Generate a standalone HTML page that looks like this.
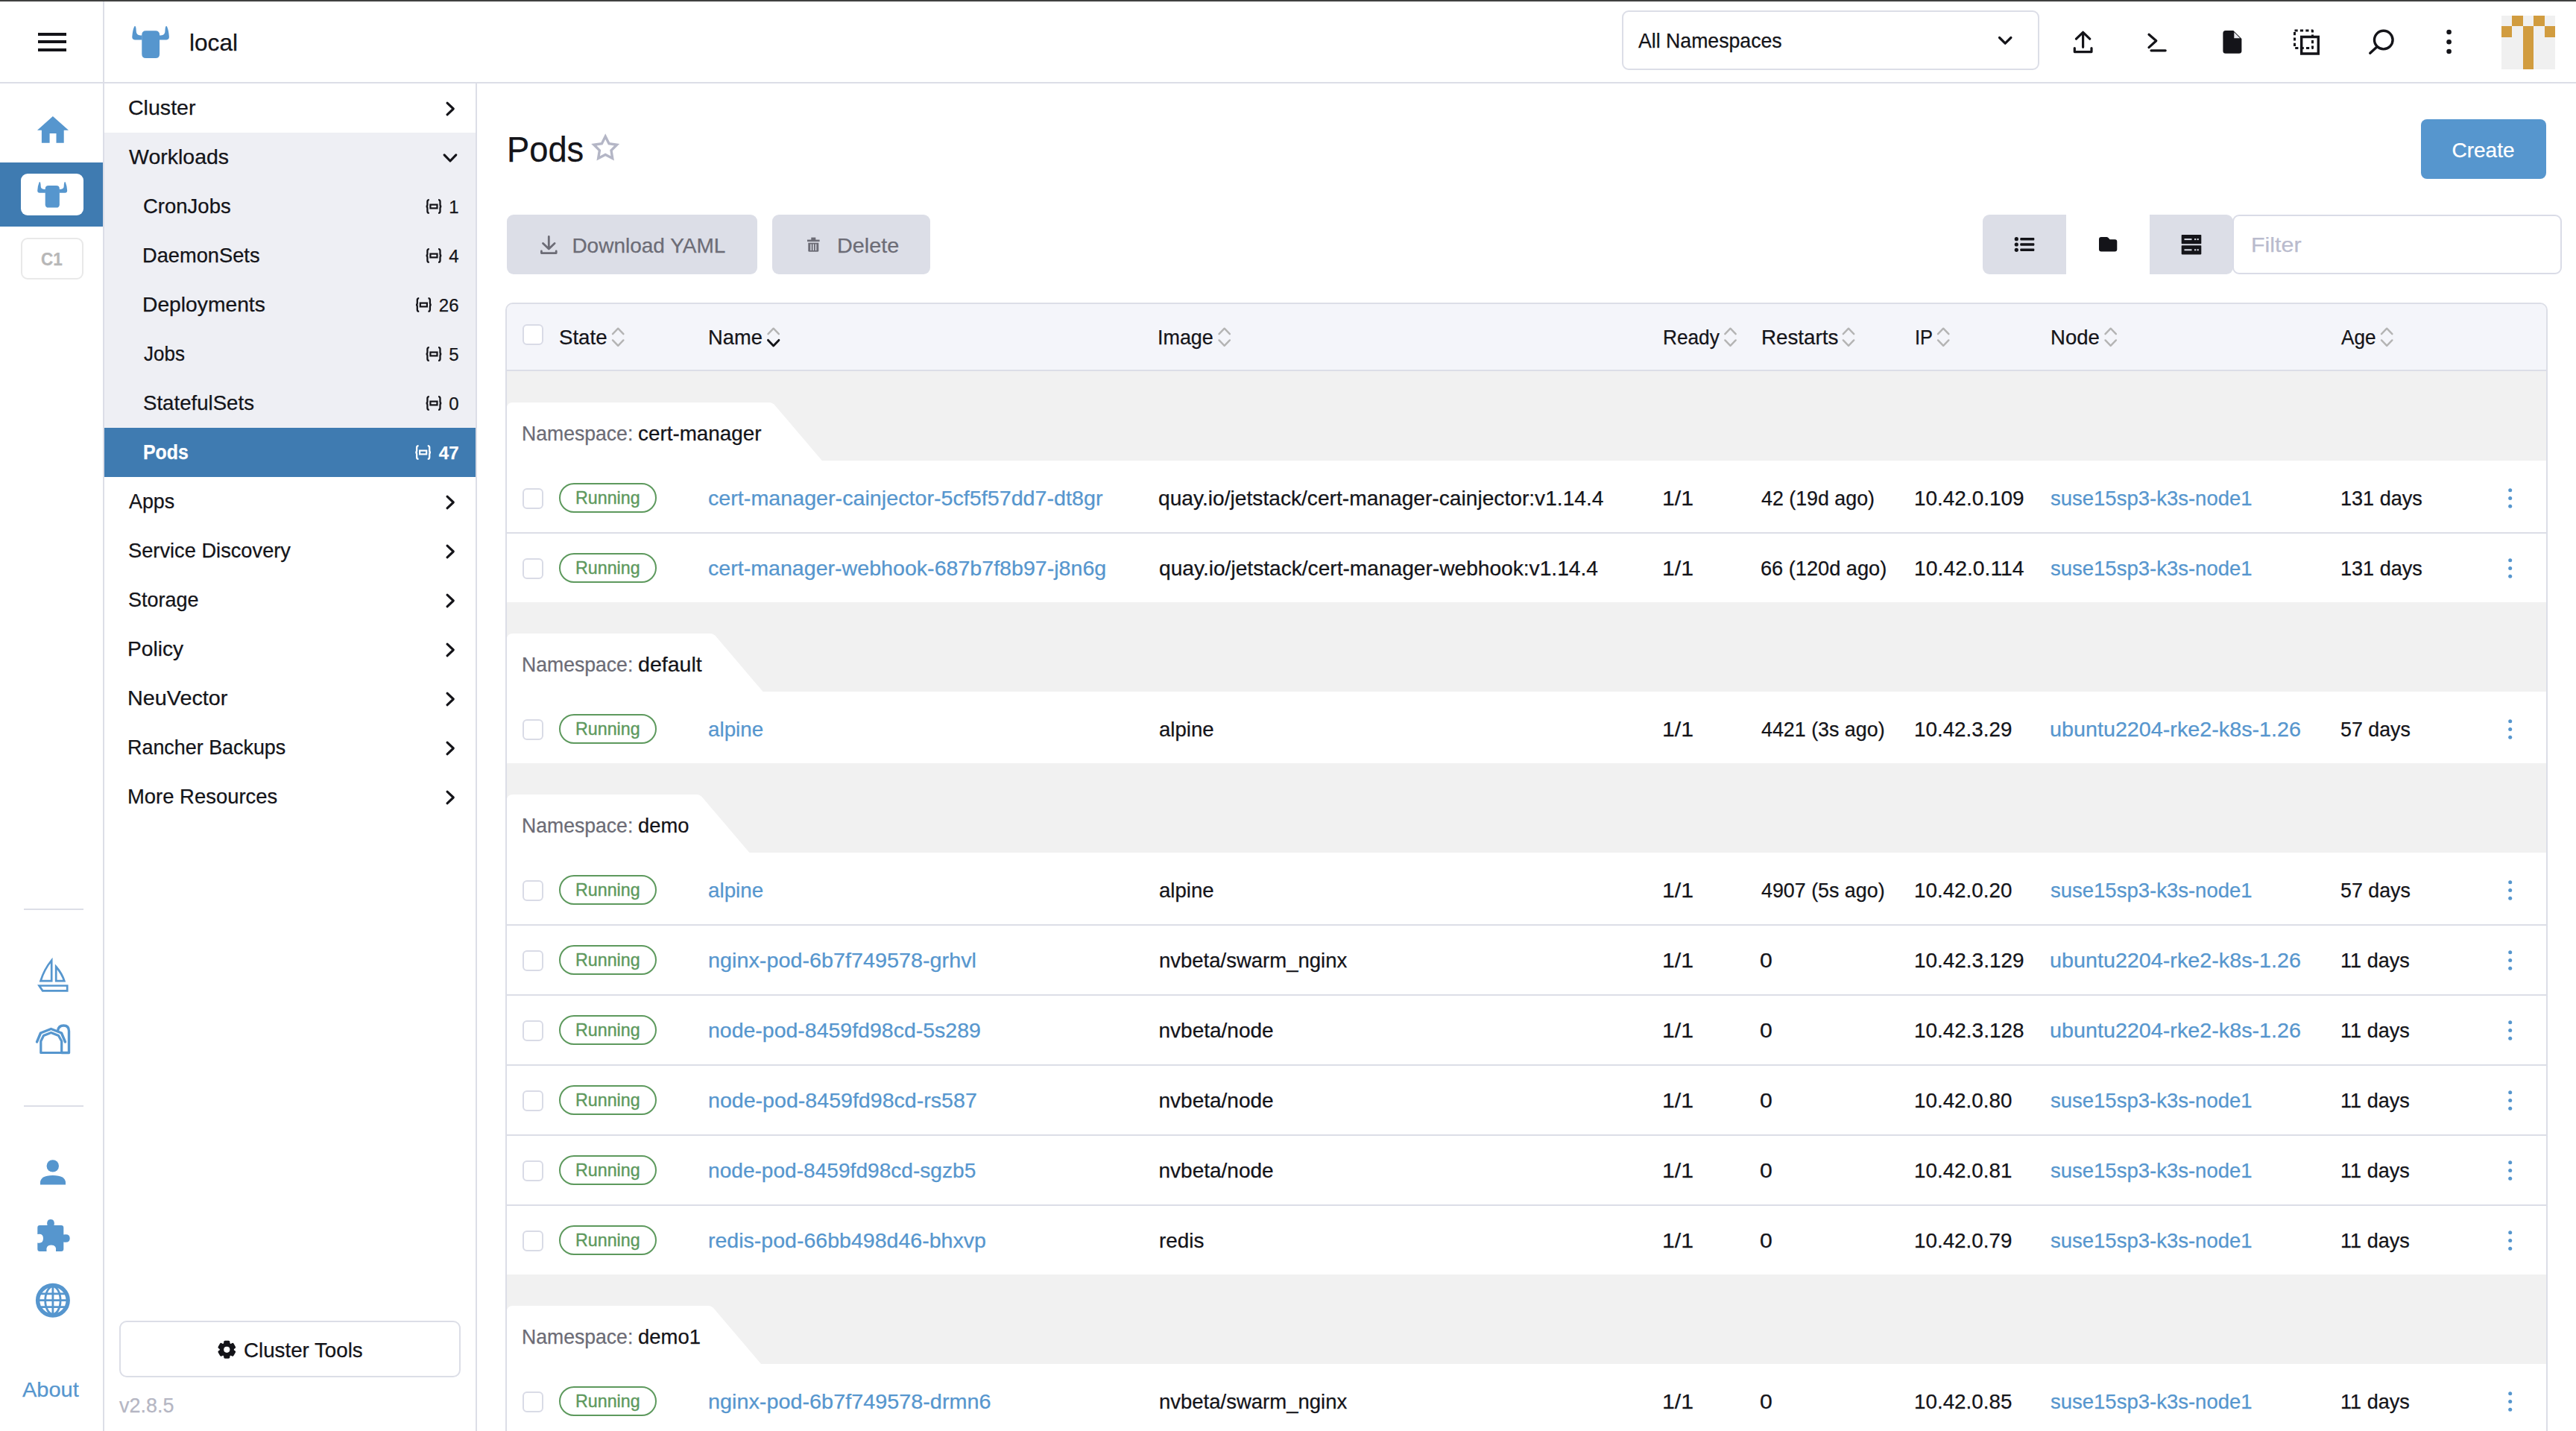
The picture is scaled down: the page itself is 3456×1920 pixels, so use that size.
<!DOCTYPE html>
<html lang="en"><head><meta charset="utf-8"><title>Pods - local - Rancher</title>
<style>
html,body{margin:0;padding:0;background:#fff}
body{width:3456px;height:1920px;overflow:hidden;position:relative;font-family:"Liberation Sans",sans-serif;color:#141419}
.t{position:absolute;white-space:nowrap;line-height:1;transform-origin:0 50%;-webkit-text-stroke:0.25px currentColor}
.b{position:absolute;box-sizing:border-box}
svg{position:absolute;left:0;top:0;overflow:visible}
.cb{position:absolute;box-sizing:border-box;width:28px;height:28px;border:2px solid #d9dbe6;border-radius:6px;background:#fff}
.badge{position:absolute;box-sizing:border-box;width:131px;height:40px;border:2px solid #5d995d;border-radius:20px}
.hl{position:absolute;height:2px;background:#dcdee7}
</style></head><body>

<header>
<div class="b" style="left:0;top:0;width:3456px;height:2px;background:#404140"></div>
<div class="b" style="left:0;top:110px;width:3456px;height:2px;background:#dcdee7"></div>
<div class="b" style="left:51px;top:43.5px;width:38px;height:4.2px;background:#141419"></div>
<div class="b" style="left:51px;top:54.1px;width:38px;height:4.2px;background:#141419"></div>
<div class="b" style="left:51px;top:64.6px;width:38px;height:4.2px;background:#141419"></div>
<svg width="50.2" height="43" viewBox="0 0 50 43" style="left:176.8px;top:34.5px"><path fill="#5696ce" d="M13.2 11.800 Q13.2 6.300 18.700 6.300 L31.500 6.300 Q37 6.300 37 11.800 L37 37.500 Q37 43 31.500 43 L18.700 43 Q13.200 43 13.200 37.500 Z"/><path fill="#5696ce" d="M13.500 18.400 L3.800 18.400 Q0 18.400 0.200 14.300 Q0.800 6 3 0.800 Q3.700 -0.400 4.800 0.500 Q5.700 3 5.700 7.300 Q5.700 12.400 11.300 12.400 L13.500 12.400 Z"/><path fill="#5696ce" d="M36.500 18.400 L46.200 18.400 Q50 18.400 49.800 14.300 Q49.200 6 47 0.800 Q46.300 -0.400 45.200 0.500 Q44.300 3 44.300 7.300 Q44.300 12.400 38.700 12.400 L36.500 12.400 Z"/></svg>
<span class="t" style="left:254.22px;top:41.0px;font-size:32px;color:#141419;transform:scaleX(0.9886);">local</span>
<div class="b" style="left:2176px;top:14px;width:560px;height:80px;border:2px solid #dcdee7;border-radius:9px;background:#fff"></div>
<span class="t" style="left:2198.40px;top:41.1px;font-size:28px;color:#141419;transform:scaleX(0.9523);">All Namespaces</span>
<svg width="3456" height="112"><g fill="none" stroke="#141419" stroke-width="3.2" stroke-linecap="round" stroke-linejoin="round"><path d="M2682.500 50.500 L2690.200 58.200 L2697.900 50.500"/><path d="M2794.600 43.500 L2794.600 63.300 M2785.500 52.200 L2794.600 43.300 L2803.700 52.200 M2783.300 64.500 L2783.300 69.600 L2806 69.600 L2806 64.500"/><path d="M2883 46.200 L2892.800 54.800 L2883 63.600 M2886 67.800 L2905.200 67.800"/><path stroke-width="3.4" stroke-linecap="butt" stroke-linejoin="miter" d="M3087.700 49.500 L3110.300 49.500 L3110.300 72 L3087.700 72 Z"/><path stroke-width="3" stroke-linecap="butt" stroke-dasharray="4.2 3.2" d="M3078.500 41 L3102.500 41 L3102.500 64.500 L3078.500 64.500 Z"/><circle cx="3197.800" cy="53.600" r="12.300" stroke-width="3.400"/><path stroke-width="3.400" d="M3188.800 63 L3179.800 71.300"/></g><path fill="#141419" d="M2982.400 44.500 Q2982.400 41 2985.900 41 L2996.300 41 L3007.400 52.100 L3007.400 68.200 Q3007.400 71.700 3003.900 71.700 L2985.900 71.700 Q2982.400 71.700 2982.400 68.200 Z"/><path fill="#e9e9ee" d="M2997.300 43.200 L3005.300 51.200 L2997.300 51.200 Z"/><circle cx="3285.600" cy="43" r="3.300" fill="#141419"/><circle cx="3285.600" cy="56.300" r="3.300" fill="#141419"/><circle cx="3285.600" cy="69" r="3.300" fill="#141419"/></svg>
<svg width="72" height="72" viewBox="0 0 5 5" style="left:3356px;top:21px" shape-rendering="crispEdges"><rect width="5" height="5" fill="#f0f0f0"/><rect x="1" y="0" width="1" height="1" fill="#d19c3f"/><rect x="3" y="0" width="1" height="1" fill="#d19c3f"/><rect x="0" y="1" width="1" height="1" fill="#d19c3f"/><rect x="2" y="1" width="1" height="1" fill="#d19c3f"/><rect x="4" y="1" width="1" height="1" fill="#d19c3f"/><rect x="2" y="2" width="1" height="1" fill="#d19c3f"/><rect x="2" y="3" width="1" height="1" fill="#d19c3f"/><rect x="2" y="4" width="1" height="1" fill="#d19c3f"/></svg>
</header>
<nav>
<div class="b" style="left:138px;top:2px;width:2px;height:1918px;background:#dcdee7"></div>
<svg width="140" height="1920"><g fill="#5696ce"><path d="M70.900 156 L92 174.800 L85.700 174.800 L85.700 191.800 L75.500 191.800 L75.500 179 L66.600 179 L66.600 191.800 L55.900 191.800 L55.900 174.800 L50 174.800 Z"/></g></svg>
<div class="b" style="left:0;top:218px;width:138px;height:86px;background:#3f7bb1"></div>
<div class="b" style="left:28px;top:233px;width:84px;height:56px;background:#fff;border-radius:9px"></div>
<svg width="40.4" height="34.6" viewBox="0 0 50 43" style="left:49.8px;top:243.7px"><path fill="#5696ce" d="M13.2 11.800 Q13.2 6.300 18.700 6.300 L31.500 6.300 Q37 6.300 37 11.800 L37 37.500 Q37 43 31.500 43 L18.700 43 Q13.200 43 13.200 37.500 Z"/><path fill="#5696ce" d="M13.500 18.400 L3.800 18.400 Q0 18.400 0.200 14.300 Q0.800 6 3 0.800 Q3.700 -0.400 4.800 0.500 Q5.700 3 5.700 7.300 Q5.700 12.400 11.300 12.400 L13.500 12.400 Z"/><path fill="#5696ce" d="M36.500 18.400 L46.200 18.400 Q50 18.400 49.800 14.300 Q49.200 6 47 0.800 Q46.300 -0.400 45.200 0.500 Q44.300 3 44.300 7.300 Q44.300 12.400 38.700 12.400 L36.500 12.400 Z"/></svg>
<div class="b" style="left:28px;top:319px;width:84px;height:56px;border:2px solid #e9e9e9;border-radius:9px"></div>
<span class="t" style="left:55.40px;top:335.7px;font-size:24px;color:#b7b7b7;font-weight:700;transform:scaleX(0.9396);">C1</span>
<div class="hl" style="left:32px;top:1219px;width:80px"></div>
<div class="hl" style="left:32px;top:1483px;width:80px"></div>
<svg width="140" height="1920"><g fill="none" stroke="#5696ce" stroke-width="2.700" stroke-linejoin="miter"><path d="M69.200 1288.500 L69.200 1316.200 L54.500 1316.200 Q59 1301 69.200 1288.500 Z"/><path d="M75.200 1297 Q83 1306 86.300 1316.200 L75.200 1316.200 Z"/><path d="M52.600 1322.500 L90.200 1322.500 L90.200 1329.300 L57.200 1329.300 Z"/></g><g fill="none" stroke="#5696ce" stroke-width="3.400" stroke-linejoin="round" stroke-linecap="round"><path d="M49.500 1398 L54.500 1386 L68.500 1380.500 L82.500 1386 L87.500 1398"/><path d="M54.800 1412.500 L54.800 1397 L58.500 1389.500 L68.500 1385.500 L78.500 1389.500 L82.700 1397 L82.700 1412.500 Z" stroke-width="3.200"/><path d="M77.500 1383 Q78.500 1376 85.300 1376 Q92.500 1376 92.500 1383.500 L92.500 1412.500 L82.700 1412.500"/></g><g fill="#5696ce"><circle cx="70.800" cy="1564.400" r="8.200"/><path d="M54 1589.500 L54 1587 Q54 1577 70.800 1577 Q88 1577 88 1587 L88 1589.500 Z"/><path d="M53.300 1644 L63.500 1644 Q62 1636 68 1636 Q74 1636 72.500 1644 L82 1644 Q85.300 1644 85.300 1647.300 L85.300 1656.500 Q93.700 1655 93.700 1661.500 Q93.700 1668 85.300 1666.500 L85.300 1675.700 Q85.300 1679 82 1679 L75 1679 Q76.500 1670.500 68.700 1670.500 Q61 1670.500 62.500 1679 L53.300 1679 Q50.300 1679 50.300 1675.700 L50.300 1667.500 Q58 1669 58 1661.500 Q58 1654.500 50.300 1656 L50.300 1647.300 Q50.300 1644 53.300 1644 Z"/></g><g fill="none" stroke="#5696ce" stroke-width="2.800"><circle cx="70.900" cy="1744.700" r="20.300" stroke-width="5.400"/><ellipse cx="70.900" cy="1744.700" rx="10.200" ry="18.500"/><path d="M70.900 1726 L70.900 1763.500 M51.500 1744.700 L90.300 1744.700 M54 1735.800 L87.800 1735.800 M54 1753.600 L87.800 1753.600"/></g></svg>
<span class="t" style="left:29.90px;top:1851.0px;font-size:28px;color:#5696ce;transform:scaleX(1.0355);">About</span>
</nav>
<aside>
<div class="b" style="left:638px;top:112px;width:2px;height:1808px;background:#dcdee7"></div>
<div class="b" style="left:140px;top:178px;width:498px;height:396px;background:#eeeff4"></div>
<div class="b" style="left:140px;top:574px;width:498px;height:66px;background:#3f7bb1"></div>
<span class="t" style="left:171.68px;top:130.6px;font-size:28px;color:#141419;transform:scaleX(1.0199);">Cluster</span>
<span class="t" style="left:172.70px;top:196.6px;font-size:28px;color:#141419;transform:scaleX(1.0179);">Workloads</span>
<span class="t" style="left:172.70px;top:658.6px;font-size:28px;color:#141419;transform:scaleX(0.9599);">Apps</span>
<span class="t" style="left:171.73px;top:724.6px;font-size:28px;color:#141419;transform:scaleX(0.9729);">Service Discovery</span>
<span class="t" style="left:171.74px;top:790.6px;font-size:28px;color:#141419;transform:scaleX(0.9638);">Storage</span>
<span class="t" style="left:170.69px;top:856.6px;font-size:28px;color:#141419;transform:scaleX(1.0043);">Policy</span>
<span class="t" style="left:170.64px;top:922.6px;font-size:28px;color:#141419;transform:scaleX(1.0279);">NeuVector</span>
<span class="t" style="left:170.78px;top:988.6px;font-size:28px;color:#141419;transform:scaleX(0.9605);">Rancher Backups</span>
<span class="t" style="left:170.74px;top:1054.6px;font-size:28px;color:#141419;transform:scaleX(0.9797);">More Resources</span>
<svg width="640" height="1920"><g fill="none" stroke="#141419" stroke-width="3.100" stroke-linecap="round" stroke-linejoin="round"><path d="M600 138.2 L608.300 146 L600 153.8"/><path d="M596.100 207.9 L604 216 L611.800 207.9"/><path d="M600 666.2 L608.300 674 L600 681.8"/><path d="M600 732.2 L608.300 740 L600 747.8"/><path d="M600 798.2 L608.300 806 L600 813.8"/><path d="M600 864.2 L608.300 872 L600 879.8"/><path d="M600 930.2 L608.300 938 L600 945.8"/><path d="M600 996.2 L608.300 1004 L600 1011.8"/><path d="M600 1062.2 L608.300 1070 L600 1077.8"/></g></svg>
<span class="t" style="left:191.92px;top:262.6px;font-size:28px;color:#141419;transform:scaleX(0.9819);">CronJobs</span>
<span class="t" style="left:602.20px;top:265.7px;font-size:24px;color:#141419;">1</span>
<span class="t" style="left:190.95px;top:328.6px;font-size:28px;color:#141419;transform:scaleX(0.9732);">DaemonSets</span>
<span class="t" style="left:602.20px;top:331.7px;font-size:24px;color:#141419;">4</span>
<span class="t" style="left:190.88px;top:394.6px;font-size:28px;color:#141419;transform:scaleX(1.0087);">Deployments</span>
<span class="t" style="left:588.85px;top:397.7px;font-size:24px;color:#141419;">26</span>
<span class="t" style="left:192.90px;top:460.6px;font-size:28px;color:#141419;transform:scaleX(0.9287);">Jobs</span>
<span class="t" style="left:602.20px;top:463.7px;font-size:24px;color:#141419;">5</span>
<span class="t" style="left:191.91px;top:526.6px;font-size:28px;color:#141419;transform:scaleX(0.9867);">StatefulSets</span>
<span class="t" style="left:602.20px;top:529.7px;font-size:24px;color:#141419;">0</span>
<span class="t" style="left:192.01px;top:592.6px;font-size:28px;color:#fff;font-weight:700;transform:scaleX(0.8896);">Pods</span>
<span class="t" style="left:588.85px;top:595.7px;font-size:24px;color:#fff;font-weight:700;">47</span>
<svg width="640" height="1920"><g transform="translate(570.8 267)" stroke="#141419" fill="none" stroke-width="2.300"><path d="M5 1.200 Q2.600 1.200 2.600 3.600 L2.600 7.800 Q2.600 10 0.800 10 Q2.600 10 2.600 12.200 L2.600 16.400 Q2.600 18.800 5 18.800"/><path d="M17.300 1.200 Q19.700 1.200 19.700 3.600 L19.700 7.800 Q19.700 10 21.500 10 Q19.700 10 19.700 12.200 L19.700 16.400 Q19.700 18.800 17.300 18.800"/><rect x="6.600" y="7.600" width="9.100" height="4.800" stroke-width="2.200"/></g><g transform="translate(570.8 333)" stroke="#141419" fill="none" stroke-width="2.300"><path d="M5 1.200 Q2.600 1.200 2.600 3.600 L2.600 7.800 Q2.600 10 0.800 10 Q2.600 10 2.600 12.200 L2.600 16.400 Q2.600 18.800 5 18.800"/><path d="M17.300 1.200 Q19.700 1.200 19.700 3.600 L19.700 7.800 Q19.700 10 21.500 10 Q19.700 10 19.700 12.200 L19.700 16.400 Q19.700 18.800 17.300 18.800"/><rect x="6.600" y="7.600" width="9.100" height="4.800" stroke-width="2.200"/></g><g transform="translate(557.2 399)" stroke="#141419" fill="none" stroke-width="2.300"><path d="M5 1.200 Q2.600 1.200 2.600 3.600 L2.600 7.800 Q2.600 10 0.800 10 Q2.600 10 2.600 12.200 L2.600 16.400 Q2.600 18.800 5 18.800"/><path d="M17.300 1.200 Q19.700 1.200 19.700 3.600 L19.700 7.800 Q19.700 10 21.500 10 Q19.700 10 19.700 12.200 L19.700 16.400 Q19.700 18.800 17.300 18.800"/><rect x="6.600" y="7.600" width="9.100" height="4.800" stroke-width="2.200"/></g><g transform="translate(570.8 465)" stroke="#141419" fill="none" stroke-width="2.300"><path d="M5 1.200 Q2.600 1.200 2.600 3.600 L2.600 7.800 Q2.600 10 0.800 10 Q2.600 10 2.600 12.200 L2.600 16.400 Q2.600 18.800 5 18.800"/><path d="M17.300 1.200 Q19.700 1.200 19.700 3.600 L19.700 7.800 Q19.700 10 21.500 10 Q19.700 10 19.700 12.200 L19.700 16.400 Q19.700 18.800 17.300 18.800"/><rect x="6.600" y="7.600" width="9.100" height="4.800" stroke-width="2.200"/></g><g transform="translate(570.8 531)" stroke="#141419" fill="none" stroke-width="2.300"><path d="M5 1.200 Q2.600 1.200 2.600 3.600 L2.600 7.800 Q2.600 10 0.800 10 Q2.600 10 2.600 12.200 L2.600 16.400 Q2.600 18.800 5 18.800"/><path d="M17.300 1.200 Q19.700 1.200 19.700 3.600 L19.700 7.800 Q19.700 10 21.500 10 Q19.700 10 19.700 12.200 L19.700 16.400 Q19.700 18.800 17.300 18.800"/><rect x="6.600" y="7.600" width="9.100" height="4.800" stroke-width="2.200"/></g><g transform="translate(556.5 597)" stroke="#fff" fill="none" stroke-width="2.300"><path d="M5 1.200 Q2.600 1.200 2.600 3.600 L2.600 7.800 Q2.600 10 0.800 10 Q2.600 10 2.600 12.200 L2.600 16.400 Q2.600 18.800 5 18.800"/><path d="M17.300 1.200 Q19.700 1.200 19.700 3.600 L19.700 7.800 Q19.700 10 21.500 10 Q19.700 10 19.700 12.200 L19.700 16.400 Q19.700 18.800 17.300 18.800"/><rect x="6.600" y="7.600" width="9.100" height="4.800" stroke-width="2.200"/></g></svg>
<div class="b" style="left:160px;top:1772px;width:458px;height:76px;border:2px solid #dcdee7;border-radius:10px"></div>
<svg width="640" height="1920"><g transform="translate(304.3 1810.800)"><g fill="#141419"><rect x="-4.100" y="-12" width="8.200" height="24" rx="1.800" transform="rotate(0)"/><rect x="-4.100" y="-12" width="8.200" height="24" rx="1.800" transform="rotate(60)"/><rect x="-4.100" y="-12" width="8.200" height="24" rx="1.800" transform="rotate(120)"/><circle r="9.600"/></g><circle r="4.100" fill="#fff"/></g></svg>
<span class="t" style="left:327.11px;top:1797.8px;font-size:28px;color:#141419;transform:scaleX(0.9898);">Cluster Tools</span>
<span class="t" style="left:160.20px;top:1871.5px;font-size:28px;color:#b5b6c3;transform:scaleX(0.9617);">v2.8.5</span>
</aside>
<main>
<span class="t" style="left:679.67px;top:177.1px;font-size:48px;color:#141419;transform:scaleX(0.9440);">Pods</span>
<svg width="3456" height="420"><path d="M812.20 183.10 L817.02 192.67 L827.61 194.29 L820.00 201.83 L821.72 212.41 L812.20 207.50 L802.68 212.41 L804.40 201.83 L796.79 194.29 L807.38 192.67 Z" fill="none" stroke="#b4b6c6" stroke-width="3.400" stroke-linejoin="miter"/></svg>
<div class="b" style="left:3248px;top:160px;width:168px;height:80px;background:#5696ce;border-radius:8px"></div>
<span class="t" style="left:3289.50px;top:187.6px;font-size:28px;color:#fff;">Create</span>
<div class="b" style="left:680px;top:288px;width:336px;height:80px;background:#dcdee7;border-radius:9px"></div>
<div class="b" style="left:1036px;top:288px;width:212px;height:80px;background:#dcdee7;border-radius:9px"></div>
<span class="t" style="left:767.40px;top:315.5px;font-size:28px;color:#6c6c76;">Download YAML</span>
<span class="t" style="left:1122.54px;top:315.5px;font-size:28px;color:#6c6c76;transform:scaleX(1.0285);">Delete</span>
<svg width="3456" height="420"><g fill="none" stroke="#6c6c76" stroke-width="2.800" stroke-linecap="round" stroke-linejoin="round"><path d="M736.300 317.500 L736.300 333.500 M728.500 326.500 L736.300 334 L744.100 326.500 M726.400 337 L726.400 339.600 L746.200 339.600 L746.200 337"/></g><g fill="#6c6c76"><rect x="1083" y="321.600" width="16.600" height="2.600"/><rect x="1088.300" y="318.600" width="6" height="3.500"/><path d="M1084.300 325.800 L1098.300 325.800 L1098.300 336.300 Q1098.300 337.800 1096.800 337.800 L1085.800 337.800 Q1084.300 337.800 1084.300 336.300 Z"/></g><g stroke="#dcdee7" stroke-width="1.400"><path d="M1088 327.500 L1088 336 M1091.300 327.500 L1091.300 336 M1094.600 327.500 L1094.600 336"/></g></svg>
<div class="b" style="left:2660px;top:288px;width:112px;height:80px;background:#dcdee7;border-radius:9px 0 0 9px"></div>
<div class="b" style="left:2884px;top:288px;width:112px;height:80px;background:#dcdee7;border-radius:0 9px 9px 0"></div>
<div class="b" style="left:2995px;top:288px;width:442px;height:80px;background:#fff;border:2px solid #dadce7;border-radius:9px"></div>
<span class="t" style="left:3019.53px;top:315.3px;font-size:28px;color:#b9bbcd;transform:scaleX(1.0852);">Filter</span>
<svg width="3456" height="420"><g fill="#141419"><circle cx="2705.300" cy="320.7" r="2.600"/><rect x="2710.300" y="318.9" width="19" height="3.600" rx="1"/><circle cx="2705.300" cy="328" r="2.600"/><rect x="2710.300" y="326.2" width="19" height="3.600" rx="1"/><circle cx="2705.300" cy="335.3" r="2.600"/><rect x="2710.300" y="333.5" width="19" height="3.600" rx="1"/><path d="M2816 321 Q2816 318 2819 318 L2826.500 318 Q2828 318 2829 319.500 L2830.500 321.200 L2837.400 321.200 Q2840.300 321.200 2840.300 324.200 L2840.300 334.500 Q2840.300 337.500 2837.300 337.500 L2819 337.500 Q2816 337.500 2816 334.500 Z"/><rect x="2926.700" y="315" width="26.600" height="12.200" rx="0.800"/><rect x="2926.700" y="329.200" width="26.600" height="12.200" rx="0.800"/></g><g fill="#dcdee7"><rect x="2930.500" y="320.1" width="10" height="2"/><rect x="2944" y="320.1" width="2.200" height="2"/><rect x="2947.600" y="320.1" width="2.200" height="2"/><rect x="2930.500" y="334.3" width="10" height="2"/><rect x="2944" y="334.3" width="2.200" height="2"/><rect x="2947.600" y="334.3" width="2.200" height="2"/></g></svg>
<div class="b" style="left:678px;top:406px;width:2740px;height:1530px;border:2px solid #dcdee7;border-radius:10px;background:#f1f1f1;overflow:hidden"><div class="b" style="left:0;top:0;width:2736px;height:88px;background:#f4f5fa"></div><div class="b" style="left:0;top:88px;width:2736px;height:2px;background:#dcdee7"></div></div>
<div class="cb" style="left:701px;top:435px"></div>
<span class="t" style="left:750.01px;top:438.6px;font-size:28px;color:#141419;transform:scaleX(0.9874);">State</span>
<span class="t" style="left:950.25px;top:438.6px;font-size:28px;color:#141419;transform:scaleX(0.9748);">Name</span>
<span class="t" style="left:1553.48px;top:438.6px;font-size:28px;color:#141419;transform:scaleX(0.9608);">Image</span>
<span class="t" style="left:2230.53px;top:438.6px;font-size:28px;color:#141419;transform:scaleX(0.9362);">Ready</span>
<span class="t" style="left:2362.52px;top:438.6px;font-size:28px;color:#141419;transform:scaleX(0.9906);">Restarts</span>
<span class="t" style="left:2568.58px;top:438.6px;font-size:28px;color:#141419;transform:scaleX(0.9084);">IP</span>
<span class="t" style="left:2751.23px;top:438.6px;font-size:28px;color:#141419;transform:scaleX(0.9835);">Node</span>
<span class="t" style="left:3140.50px;top:438.6px;font-size:28px;color:#141419;transform:scaleX(0.9340);">Age</span>
<svg width="3456" height="520"><g fill="none" stroke-width="2.400" stroke-linecap="round" stroke-linejoin="round"><path stroke="#b4b4b4" d="M822.0 448.200 L829.2 440.700 L836.4 448.200"/><path stroke="#b4b4b4" stroke-width="2.4" d="M822.0 456.400 L829.2 463.900 L836.4 456.400"/><path stroke="#b4b4b4" d="M1030.5 448.200 L1037.7 440.700 L1044.9 448.200"/><path stroke="#141419" stroke-width="2.9" d="M1030.5 456.400 L1037.7 463.900 L1044.9 456.400"/><path stroke="#b4b4b4" d="M1635.5 448.200 L1642.7 440.700 L1649.9 448.200"/><path stroke="#b4b4b4" stroke-width="2.4" d="M1635.5 456.400 L1642.7 463.900 L1649.9 456.400"/><path stroke="#b4b4b4" d="M2314.3 448.200 L2321.5 440.700 L2328.7 448.200"/><path stroke="#b4b4b4" stroke-width="2.4" d="M2314.3 456.400 L2321.5 463.900 L2328.7 456.400"/><path stroke="#b4b4b4" d="M2472.8 448.200 L2480.0 440.700 L2487.2 448.200"/><path stroke="#b4b4b4" stroke-width="2.4" d="M2472.8 456.400 L2480.0 463.900 L2487.2 456.400"/><path stroke="#b4b4b4" d="M2600.0 448.200 L2607.2 440.700 L2614.4 448.200"/><path stroke="#b4b4b4" stroke-width="2.4" d="M2600.0 456.400 L2607.2 463.900 L2614.4 456.400"/><path stroke="#b4b4b4" d="M2824.5 448.200 L2831.7 440.700 L2838.9 448.200"/><path stroke="#b4b4b4" stroke-width="2.4" d="M2824.5 456.400 L2831.7 463.900 L2838.9 456.400"/><path stroke="#b4b4b4" d="M3195.0 448.200 L3202.2 440.700 L3209.4 448.200"/><path stroke="#b4b4b4" stroke-width="2.4" d="M3195.0 456.400 L3202.2 463.900 L3209.4 456.400"/></g></svg>
<section>
<div class="b" style="left:680px;top:618px;width:2736px;height:190px;background:#fff"></div>
<svg width="3456" height="1920"><path fill="#fff" d="M680 548 Q680 540 688 540 L1031.8 540 Q1036.3 540 1039.8 544 L1102.8 618 L680 618 Z"/></svg>
<span class="t" style="left:699.80px;top:567.6px;font-size:28px;color:#6c6c76;transform:scaleX(0.9498);">Namespace:</span>
<span class="t" style="left:855.61px;top:567.6px;font-size:28px;color:#141419;transform:scaleX(0.9940);">cert-manager</span>
<div class="cb" style="left:701px;top:654.5px"></div>
<div class="badge" style="left:750px;top:648.0px"></div>
<span class="t" style="left:772.23px;top:656.1px;font-size:24px;color:#5d995d;transform:scaleX(0.9684);-webkit-text-stroke:0.4px #5d995d;">Running</span>
<span class="t" style="left:949.98px;top:655.2px;font-size:28px;color:#5696ce;transform:scaleX(1.0247);">cert-manager-cainjector-5cf5f57dd7-dt8gr</span>
<span class="t" style="left:1554.49px;top:655.2px;font-size:28px;color:#141419;transform:scaleX(1.0059);">quay.io/jetstack/cert-manager-cainjector:v1.14.4</span>
<span class="t" style="left:2230.24px;top:655.2px;font-size:28px;color:#141419;transform:scaleX(1.0811);">1/1</span>
<span class="t" style="left:2362.50px;top:655.2px;font-size:28px;color:#141419;transform:scaleX(0.9571);">42 (19d ago)</span>
<span class="t" style="left:2567.60px;top:655.2px;font-size:28px;color:#141419;transform:scaleX(0.9976);">10.42.0.109</span>
<span class="t" style="left:2751.00px;top:655.2px;font-size:28px;color:#5696ce;transform:scaleX(0.9820);">suse15sp3-k3s-node1</span>
<span class="t" style="left:3140.47px;top:655.2px;font-size:28px;color:#141419;transform:scaleX(0.9671);">131 days</span>
<div class="hl" style="left:680px;top:714px;width:2736px"></div>
<div class="cb" style="left:701px;top:748.5px"></div>
<div class="badge" style="left:750px;top:742.0px"></div>
<span class="t" style="left:772.23px;top:750.1px;font-size:24px;color:#5d995d;transform:scaleX(0.9684);-webkit-text-stroke:0.4px #5d995d;">Running</span>
<span class="t" style="left:949.98px;top:749.2px;font-size:28px;color:#5696ce;transform:scaleX(1.0215);">cert-manager-webhook-687b7f8b97-j8n6g</span>
<span class="t" style="left:1554.50px;top:749.2px;font-size:28px;color:#141419;transform:scaleX(1.0045);">quay.io/jetstack/cert-manager-webhook:v1.14.4</span>
<span class="t" style="left:2230.24px;top:749.2px;font-size:28px;color:#141419;transform:scaleX(1.0811);">1/1</span>
<span class="t" style="left:2361.53px;top:749.2px;font-size:28px;color:#141419;transform:scaleX(0.9707);">66 (120d ago)</span>
<span class="t" style="left:2567.58px;top:749.2px;font-size:28px;color:#141419;transform:scaleX(1.0121);">10.42.0.114</span>
<span class="t" style="left:2751.00px;top:749.2px;font-size:28px;color:#5696ce;transform:scaleX(0.9820);">suse15sp3-k3s-node1</span>
<span class="t" style="left:3140.47px;top:749.2px;font-size:28px;color:#141419;transform:scaleX(0.9671);">131 days</span>
</section>
<section>
<div class="b" style="left:680px;top:928px;width:2736px;height:96px;background:#fff"></div>
<svg width="3456" height="1920"><path fill="#fff" d="M680 858 Q680 850 688 850 L952.6 850 Q957.1 850 960.6 854 L1023.6 928 L680 928 Z"/></svg>
<span class="t" style="left:699.80px;top:877.6px;font-size:28px;color:#6c6c76;transform:scaleX(0.9498);">Namespace:</span>
<span class="t" style="left:855.58px;top:877.6px;font-size:28px;color:#141419;transform:scaleX(1.0205);">default</span>
<div class="cb" style="left:701px;top:964.5px"></div>
<div class="badge" style="left:750px;top:958.0px"></div>
<span class="t" style="left:772.23px;top:966.1px;font-size:24px;color:#5d995d;transform:scaleX(0.9684);-webkit-text-stroke:0.4px #5d995d;">Running</span>
<span class="t" style="left:950.01px;top:965.2px;font-size:28px;color:#5696ce;transform:scaleX(0.9924);">alpine</span>
<span class="t" style="left:1554.51px;top:965.2px;font-size:28px;color:#141419;transform:scaleX(0.9855);">alpine</span>
<span class="t" style="left:2230.24px;top:965.2px;font-size:28px;color:#141419;transform:scaleX(1.0811);">1/1</span>
<span class="t" style="left:2362.50px;top:965.2px;font-size:28px;color:#141419;transform:scaleX(0.9582);">4421 (3s ago)</span>
<span class="t" style="left:2567.61px;top:965.2px;font-size:28px;color:#141419;transform:scaleX(0.9925);">10.42.3.29</span>
<span class="t" style="left:2749.97px;top:965.2px;font-size:28px;color:#5696ce;transform:scaleX(1.0261);">ubuntu2204-rke2-k8s-1.26</span>
<span class="t" style="left:3140.04px;top:965.2px;font-size:28px;color:#141419;transform:scaleX(0.9577);">57 days</span>
</section>
<section>
<div class="b" style="left:680px;top:1144px;width:2736px;height:566px;background:#fff"></div>
<svg width="3456" height="1920"><path fill="#fff" d="M680 1074 Q680 1066 688 1066 L934.4 1066 Q938.9 1066 942.4 1070 L1005.4 1144 L680 1144 Z"/></svg>
<span class="t" style="left:699.80px;top:1093.6px;font-size:28px;color:#6c6c76;transform:scaleX(0.9498);">Namespace:</span>
<span class="t" style="left:855.62px;top:1093.6px;font-size:28px;color:#141419;transform:scaleX(0.9756);">demo</span>
<div class="cb" style="left:701px;top:1180.5px"></div>
<div class="badge" style="left:750px;top:1174.0px"></div>
<span class="t" style="left:772.23px;top:1182.1px;font-size:24px;color:#5d995d;transform:scaleX(0.9684);-webkit-text-stroke:0.4px #5d995d;">Running</span>
<span class="t" style="left:950.01px;top:1181.2px;font-size:28px;color:#5696ce;transform:scaleX(0.9924);">alpine</span>
<span class="t" style="left:1554.51px;top:1181.2px;font-size:28px;color:#141419;transform:scaleX(0.9855);">alpine</span>
<span class="t" style="left:2230.24px;top:1181.2px;font-size:28px;color:#141419;transform:scaleX(1.0811);">1/1</span>
<span class="t" style="left:2362.50px;top:1181.2px;font-size:28px;color:#141419;transform:scaleX(0.9582);">4907 (5s ago)</span>
<span class="t" style="left:2567.61px;top:1181.2px;font-size:28px;color:#141419;transform:scaleX(0.9925);">10.42.0.20</span>
<span class="t" style="left:2751.00px;top:1181.2px;font-size:28px;color:#5696ce;transform:scaleX(0.9820);">suse15sp3-k3s-node1</span>
<span class="t" style="left:3140.04px;top:1181.2px;font-size:28px;color:#141419;transform:scaleX(0.9577);">57 days</span>
<div class="hl" style="left:680px;top:1240px;width:2736px"></div>
<div class="cb" style="left:701px;top:1274.5px"></div>
<div class="badge" style="left:750px;top:1268.0px"></div>
<span class="t" style="left:772.23px;top:1276.1px;font-size:24px;color:#5d995d;transform:scaleX(0.9684);-webkit-text-stroke:0.4px #5d995d;">Running</span>
<span class="t" style="left:949.97px;top:1275.2px;font-size:28px;color:#5696ce;transform:scaleX(1.0278);">nginx-pod-6b7f749578-grhvl</span>
<span class="t" style="left:1554.52px;top:1275.2px;font-size:28px;color:#141419;transform:scaleX(0.9820);">nvbeta/swarm_nginx</span>
<span class="t" style="left:2230.24px;top:1275.2px;font-size:28px;color:#141419;transform:scaleX(1.0811);">1/1</span>
<span class="t" style="left:2361.42px;top:1275.2px;font-size:28px;color:#141419;transform:scaleX(1.0786);">0</span>
<span class="t" style="left:2567.61px;top:1275.2px;font-size:28px;color:#141419;transform:scaleX(0.9969);">10.42.3.129</span>
<span class="t" style="left:2749.97px;top:1275.2px;font-size:28px;color:#5696ce;transform:scaleX(1.0261);">ubuntu2204-rke2-k8s-1.26</span>
<span class="t" style="left:3140.46px;top:1275.2px;font-size:28px;color:#141419;transform:scaleX(0.9678);">11 days</span>
<div class="hl" style="left:680px;top:1334px;width:2736px"></div>
<div class="cb" style="left:701px;top:1368.5px"></div>
<div class="badge" style="left:750px;top:1362.0px"></div>
<span class="t" style="left:772.23px;top:1370.1px;font-size:24px;color:#5d995d;transform:scaleX(0.9684);-webkit-text-stroke:0.4px #5d995d;">Running</span>
<span class="t" style="left:949.98px;top:1369.2px;font-size:28px;color:#5696ce;transform:scaleX(1.0172);">node-pod-8459fd98cd-5s289</span>
<span class="t" style="left:1554.50px;top:1369.2px;font-size:28px;color:#141419;">nvbeta/node</span>
<span class="t" style="left:2230.24px;top:1369.2px;font-size:28px;color:#141419;transform:scaleX(1.0811);">1/1</span>
<span class="t" style="left:2361.42px;top:1369.2px;font-size:28px;color:#141419;transform:scaleX(1.0786);">0</span>
<span class="t" style="left:2567.61px;top:1369.2px;font-size:28px;color:#141419;transform:scaleX(0.9969);">10.42.3.128</span>
<span class="t" style="left:2749.97px;top:1369.2px;font-size:28px;color:#5696ce;transform:scaleX(1.0261);">ubuntu2204-rke2-k8s-1.26</span>
<span class="t" style="left:3140.46px;top:1369.2px;font-size:28px;color:#141419;transform:scaleX(0.9678);">11 days</span>
<div class="hl" style="left:680px;top:1428px;width:2736px"></div>
<div class="cb" style="left:701px;top:1462.5px"></div>
<div class="badge" style="left:750px;top:1456.0px"></div>
<span class="t" style="left:772.23px;top:1464.1px;font-size:24px;color:#5d995d;transform:scaleX(0.9684);-webkit-text-stroke:0.4px #5d995d;">Running</span>
<span class="t" style="left:949.98px;top:1463.2px;font-size:28px;color:#5696ce;transform:scaleX(1.0210);">node-pod-8459fd98cd-rs587</span>
<span class="t" style="left:1554.50px;top:1463.2px;font-size:28px;color:#141419;">nvbeta/node</span>
<span class="t" style="left:2230.24px;top:1463.2px;font-size:28px;color:#141419;transform:scaleX(1.0811);">1/1</span>
<span class="t" style="left:2361.42px;top:1463.2px;font-size:28px;color:#141419;transform:scaleX(1.0786);">0</span>
<span class="t" style="left:2567.61px;top:1463.2px;font-size:28px;color:#141419;transform:scaleX(0.9925);">10.42.0.80</span>
<span class="t" style="left:2751.00px;top:1463.2px;font-size:28px;color:#5696ce;transform:scaleX(0.9820);">suse15sp3-k3s-node1</span>
<span class="t" style="left:3140.46px;top:1463.2px;font-size:28px;color:#141419;transform:scaleX(0.9678);">11 days</span>
<div class="hl" style="left:680px;top:1522px;width:2736px"></div>
<div class="cb" style="left:701px;top:1556.5px"></div>
<div class="badge" style="left:750px;top:1550.0px"></div>
<span class="t" style="left:772.23px;top:1558.1px;font-size:24px;color:#5d995d;transform:scaleX(0.9684);-webkit-text-stroke:0.4px #5d995d;">Running</span>
<span class="t" style="left:950.00px;top:1557.2px;font-size:28px;color:#5696ce;transform:scaleX(1.0034);">node-pod-8459fd98cd-sgzb5</span>
<span class="t" style="left:1554.50px;top:1557.2px;font-size:28px;color:#141419;">nvbeta/node</span>
<span class="t" style="left:2230.24px;top:1557.2px;font-size:28px;color:#141419;transform:scaleX(1.0811);">1/1</span>
<span class="t" style="left:2361.42px;top:1557.2px;font-size:28px;color:#141419;transform:scaleX(1.0786);">0</span>
<span class="t" style="left:2567.61px;top:1557.2px;font-size:28px;color:#141419;transform:scaleX(0.9925);">10.42.0.81</span>
<span class="t" style="left:2751.00px;top:1557.2px;font-size:28px;color:#5696ce;transform:scaleX(0.9820);">suse15sp3-k3s-node1</span>
<span class="t" style="left:3140.46px;top:1557.2px;font-size:28px;color:#141419;transform:scaleX(0.9678);">11 days</span>
<div class="hl" style="left:680px;top:1616px;width:2736px"></div>
<div class="cb" style="left:701px;top:1650.5px"></div>
<div class="badge" style="left:750px;top:1644.0px"></div>
<span class="t" style="left:772.23px;top:1652.1px;font-size:24px;color:#5d995d;transform:scaleX(0.9684);-webkit-text-stroke:0.4px #5d995d;">Running</span>
<span class="t" style="left:949.98px;top:1651.2px;font-size:28px;color:#5696ce;transform:scaleX(1.0191);">redis-pod-66bb498d46-bhxvp</span>
<span class="t" style="left:1554.50px;top:1651.2px;font-size:28px;color:#141419;transform:scaleX(0.9951);">redis</span>
<span class="t" style="left:2230.24px;top:1651.2px;font-size:28px;color:#141419;transform:scaleX(1.0811);">1/1</span>
<span class="t" style="left:2361.42px;top:1651.2px;font-size:28px;color:#141419;transform:scaleX(1.0786);">0</span>
<span class="t" style="left:2567.61px;top:1651.2px;font-size:28px;color:#141419;transform:scaleX(0.9925);">10.42.0.79</span>
<span class="t" style="left:2751.00px;top:1651.2px;font-size:28px;color:#5696ce;transform:scaleX(0.9820);">suse15sp3-k3s-node1</span>
<span class="t" style="left:3140.46px;top:1651.2px;font-size:28px;color:#141419;transform:scaleX(0.9678);">11 days</span>
</section>
<section>
<div class="b" style="left:680px;top:1830px;width:2736px;height:96px;background:#fff"></div>
<svg width="3456" height="1920"><path fill="#fff" d="M680 1760 Q680 1752 688 1752 L950.0 1752 Q954.5 1752 958.0 1756 L1021.0 1830 L680 1830 Z"/></svg>
<span class="t" style="left:699.80px;top:1779.6px;font-size:28px;color:#6c6c76;transform:scaleX(0.9498);">Namespace:</span>
<span class="t" style="left:855.62px;top:1779.6px;font-size:28px;color:#141419;transform:scaleX(0.9805);">demo1</span>
<div class="cb" style="left:701px;top:1866.5px"></div>
<div class="badge" style="left:750px;top:1860.0px"></div>
<span class="t" style="left:772.23px;top:1868.1px;font-size:24px;color:#5d995d;transform:scaleX(0.9684);-webkit-text-stroke:0.4px #5d995d;">Running</span>
<span class="t" style="left:949.97px;top:1867.2px;font-size:28px;color:#5696ce;transform:scaleX(1.0287);">nginx-pod-6b7f749578-drmn6</span>
<span class="t" style="left:1554.52px;top:1867.2px;font-size:28px;color:#141419;transform:scaleX(0.9820);">nvbeta/swarm_nginx</span>
<span class="t" style="left:2230.24px;top:1867.2px;font-size:28px;color:#141419;transform:scaleX(1.0811);">1/1</span>
<span class="t" style="left:2361.42px;top:1867.2px;font-size:28px;color:#141419;transform:scaleX(1.0786);">0</span>
<span class="t" style="left:2567.61px;top:1867.2px;font-size:28px;color:#141419;transform:scaleX(0.9925);">10.42.0.85</span>
<span class="t" style="left:2751.00px;top:1867.2px;font-size:28px;color:#5696ce;transform:scaleX(0.9820);">suse15sp3-k3s-node1</span>
<span class="t" style="left:3140.46px;top:1867.2px;font-size:28px;color:#141419;transform:scaleX(0.9678);">11 days</span>
</section>
<svg width="3456" height="1920"><g fill="#5696ce"><circle cx="3367.700" cy="657.7" r="2.500"/><circle cx="3367.700" cy="668.5" r="2.500"/><circle cx="3367.700" cy="679.3" r="2.500"/><circle cx="3367.700" cy="751.7" r="2.500"/><circle cx="3367.700" cy="762.5" r="2.500"/><circle cx="3367.700" cy="773.3" r="2.500"/><circle cx="3367.700" cy="967.7" r="2.500"/><circle cx="3367.700" cy="978.5" r="2.500"/><circle cx="3367.700" cy="989.3" r="2.500"/><circle cx="3367.700" cy="1183.7" r="2.500"/><circle cx="3367.700" cy="1194.5" r="2.500"/><circle cx="3367.700" cy="1205.3" r="2.500"/><circle cx="3367.700" cy="1277.7" r="2.500"/><circle cx="3367.700" cy="1288.5" r="2.500"/><circle cx="3367.700" cy="1299.3" r="2.500"/><circle cx="3367.700" cy="1371.7" r="2.500"/><circle cx="3367.700" cy="1382.5" r="2.500"/><circle cx="3367.700" cy="1393.3" r="2.500"/><circle cx="3367.700" cy="1465.7" r="2.500"/><circle cx="3367.700" cy="1476.5" r="2.500"/><circle cx="3367.700" cy="1487.3" r="2.500"/><circle cx="3367.700" cy="1559.7" r="2.500"/><circle cx="3367.700" cy="1570.5" r="2.500"/><circle cx="3367.700" cy="1581.3" r="2.500"/><circle cx="3367.700" cy="1653.7" r="2.500"/><circle cx="3367.700" cy="1664.5" r="2.500"/><circle cx="3367.700" cy="1675.3" r="2.500"/><circle cx="3367.700" cy="1869.7" r="2.500"/><circle cx="3367.700" cy="1880.5" r="2.500"/><circle cx="3367.700" cy="1891.3" r="2.500"/></g></svg>
</main>
</body></html>
